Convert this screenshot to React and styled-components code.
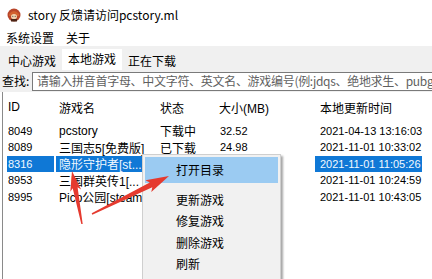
import React from 'react';
import styled, { createGlobalStyle } from 'styled-components';

const GlobalStyle = createGlobalStyle`
  html, body {
    margin: 0;
    padding: 0;
    background: #fff;
  }
  body {
    font-family: "Noto Sans CJK SC", "Liberation Sans", sans-serif;
    font-size: 12px;
    color: #000;
  }
`;

const Window = styled.div`
  position: relative;
  width: 432px;
  height: 279px;
  overflow: hidden;
  background: #fff;
  display: flex;
  flex-direction: column;
`;

const TitleBar = styled.div`
  height: 30px;
  flex-shrink: 0;
  display: flex;
  align-items: center;
  gap: 7px;
  padding-left: 7px;
  font-size: 12px;
  line-height: 1;
`;

const MenuBar = styled.div`
  height: 16px;
  flex-shrink: 0;
  display: flex;
  align-items: center;
  line-height: 1;
`;

const MenuItem = styled.span`
  padding: 0 6px;
`;

const TabArea = styled.div`
  background: #f0f0f0;
  flex-shrink: 0;
`;

const TabStrip = styled.div`
  height: 24px;
  display: flex;
  align-items: flex-end;
  padding-left: 2px;
`;

const Tab = styled.div`
  height: ${p => (p.$active ? '21px' : '18px')};
  padding: 0 6px;
  padding-bottom: ${p => (p.$active ? '2px' : '0')};
  display: flex;
  align-items: center;
  line-height: 1;
  background: ${p => (p.$active ? '#fff' : 'transparent')};
  box-sizing: border-box;
`;

const SearchRow = styled.div`
  height: 22px;
  display: flex;
  align-items: center;
  gap: 1px;
  padding-left: 2px;
`;

const SearchLabel = styled.span`
  line-height: 1;
  width: 29px;
  flex-shrink: 0;
`;

const SearchBox = styled.div`
  flex: 1;
  height: 19px;
  margin-right: -20px;
  border: 1px solid #7a7a7a;
  background: #fff;
  box-sizing: border-box;
  display: flex;
  align-items: center;
  padding-left: 4px;
  overflow: hidden;
  white-space: nowrap;
  color: #5f5f5f;
  line-height: 1;
  letter-spacing: -0.3px;
`;

const ListView = styled.div`
  flex: 1;
  margin-left: 2px;
  border-left: 1px solid #8a8a8a;
  background: #fff;
  font-family: "Liberation Sans", "Noto Sans CJK SC", sans-serif;
`;

const Grid = styled.div`
  display: grid;
  grid-template-columns: 52px 100px 60px 100px 1fr;
  height: ${p => p.$h};
  align-items: center;
  white-space: nowrap;
`;

const Cell = styled.div`
  padding-left: ${p => p.$pad || 5}px;
  font-size: ${p => (p.$num ? '11px' : '12px')};
  overflow: hidden;
  height: 100%;
  display: flex;
  align-items: center;
`;

const Hl = styled.span`
  display: inline-flex;
  align-items: center;
  height: 100%;
  background: #0f78d6;
  color: #f2f8ff;
  margin-left: -${p => p.$pre}px;
  padding-left: ${p => p.$pre}px;
  padding-right: ${p => p.$post}px;
  width: ${p => p.$w || 'auto'};
`;

const ContextMenu = styled.div`
  position: absolute;
  left: 142px;
  top: 154px;
  width: 139px;
  height: 140px;
  background: #f1f1f1;
  border: 1px solid #cfcfcf;
  box-shadow: 2px 2px 2px rgba(0, 0, 0, 0.35);
  padding-top: 2px;
  box-sizing: border-box;
`;

const CtxItem = styled.div`
  height: ${p => (p.$tall ? '26px' : '21.5px')};
  margin: 0 2px;
  padding-left: 31px;
  display: flex;
  align-items: center;
  line-height: 1;
  background: ${p => (p.$hover ? '#9bcbf2' : 'transparent')};
`;

const CtxGap = styled.div`
  height: 6px;
`;

const Overlay = styled.svg`
  position: absolute;
  left: 0;
  top: 0;
  pointer-events: none;
`;

// rows 3-5: state / size cells sit under the context menu in the screenshot
const rows = [
  { id: '8049', name: 'pcstory', state: '下载中', size: '32.52', time: '2021-04-13 13:16:03' },
  { id: '8089', name: '三国志5[免费版]', state: '已下载', size: '24.98', time: '2021-11-01 10:33:02' },
  { id: '8316', name: '隐形守护者[st...', state: '', size: '', time: '2021-11-01 11:05:26', sel: true },
  { id: '8953', name: '三国群英传1[...', state: '', size: '', time: '2021-11-01 10:24:59' },
  { id: '8995', name: 'Pico公园[steam]', state: '', size: '', time: '2021-11-01 10:43:05' },
];

function arrowPoints(tail, tip, headLen, headW, w0, w1) {
  const dx = tip[0] - tail[0];
  const dy = tip[1] - tail[1];
  const len = Math.hypot(dx, dy);
  const ux = dx / len, uy = dy / len;
  const nx = -uy, ny = ux;
  const bx = tip[0] - ux * headLen, by = tip[1] - uy * headLen;
  const bbx = bx - ux * 3, bby = by - uy * 3;
  const pts = [
    [tail[0] + nx * w0 / 2, tail[1] + ny * w0 / 2],
    [bx + nx * w1 / 2, by + ny * w1 / 2],
    [bbx + nx * headW / 2, bby + ny * headW / 2],
    tip,
    [bbx - nx * headW / 2, bby - ny * headW / 2],
    [bx - nx * w1 / 2, by - ny * w1 / 2],
    [tail[0] - nx * w0 / 2, tail[1] - ny * w0 / 2],
  ];
  return pts.map(p => p.map(v => v.toFixed(1)).join(',')).join(' ');
}

function AppIcon() {
  return (
    <svg width="14" height="14" viewBox="0 0 14 14">
      <circle cx="7" cy="7" r="6.5" fill="#b8452a" />
      <path d="M2 6 Q7 0 12 6 L12 8 L2 8 Z" fill="#d2602f" />
      <ellipse cx="7" cy="8.5" rx="3" ry="2.6" fill="#f1d0ad" />
      <rect x="4" y="11" width="6" height="2.5" fill="#4b2416" />
      <circle cx="5.8" cy="8.3" r="0.5" fill="#222" />
      <circle cx="8.2" cy="8.3" r="0.5" fill="#222" />
    </svg>
  );
}

export default function App() {
  return (
    <>
      <GlobalStyle />
      <Window>
        <TitleBar>
          <AppIcon />
          <span>story 反馈请访问pcstory.ml</span>
        </TitleBar>
        <MenuBar>
          <MenuItem>系统设置</MenuItem>
          <MenuItem>关于</MenuItem>
        </MenuBar>
        <TabArea>
          <TabStrip>
            <Tab>中心游戏</Tab>
            <Tab $active>本地游戏</Tab>
            <Tab>正在下载</Tab>
          </TabStrip>
          <SearchRow>
            <SearchLabel>查找:</SearchLabel>
            <SearchBox>请输入拼音首字母、中文字符、英文名、游戏编号(例:jdqs、绝地求生、pubg</SearchBox>
          </SearchRow>
        </TabArea>
        <ListView>
          <Grid $h="30.5px">
            <Cell $pad={5}>ID</Cell>
            <Cell $pad={4}>游戏名</Cell>
            <Cell $pad={5}>状态</Cell>
            <Cell $pad={4}>大小(MB)</Cell>
            <Cell $pad={5}>本地更新时间</Cell>
          </Grid>
          {rows.map(r => (
            <Grid key={r.id} $h="16.5px">
              <Cell $num $pad={5}>
                {r.sel ? <Hl $pre={1} $post={0} $w="46px">{r.id}</Hl> : r.id}
              </Cell>
              <Cell $pad={4}>
                {r.sel ? <Hl $pre={3} $post={1}>{r.name}</Hl> : r.name}
              </Cell>
              <Cell $pad={5}>{r.state}</Cell>
              <Cell $num $pad={5}>{r.size}</Cell>
              <Cell $num $pad={5}>
                {r.sel ? <Hl $pre={6} $post={1}>{r.time}</Hl> : r.time}
              </Cell>
            </Grid>
          ))}
        </ListView>

        <ContextMenu>
          <CtxItem $tall $hover>打开目录</CtxItem>
          <CtxGap />
          <CtxItem>更新游戏</CtxItem>
          <CtxItem>修复游戏</CtxItem>
          <CtxItem>删除游戏</CtxItem>
          <CtxItem>刷新</CtxItem>
        </ContextMenu>

        <Overlay width="432" height="279" viewBox="0 0 432 279">
          <polygon points={arrowPoints([82, 224], [72, 171], 17, 11, 1.5, 5)} fill="#e53a2f" />
          <polygon points={arrowPoints([92, 214], [169, 176], 20, 13, 1.5, 5.5)} fill="#e53a2f" />
        </Overlay>
      </Window>
    </>
  );
}
